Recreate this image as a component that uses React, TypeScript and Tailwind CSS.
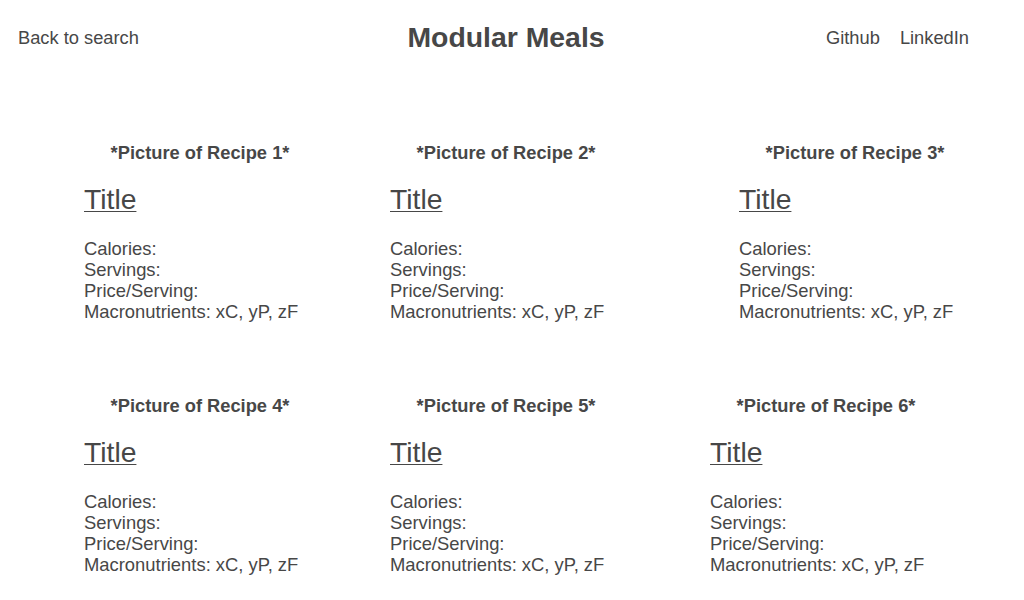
const recipes = [
  { n: 1, ml: "ml-[84px]" },
  { n: 2, ml: "ml-[74px]" },
  { n: 3, ml: "ml-[117px]" },
  { n: 4, ml: "ml-[84px]" },
  { n: 5, ml: "ml-[74px]" },
  { n: 6, ml: "ml-[88px]" },
];

const RecipeCard = ({ n, ml }: { n: number; ml: string }) => {
  return (
    <div className={`w-[232px] shrink-0 ${ml}`}>
      <p className="text-center font-bold text-[18.3px] leading-[21px]">
        *Picture of Recipe {n}*
      </p>
      <h2 className="mt-[20px] text-[28.3px] leading-[32px] underline underline-offset-[2px] decoration-1">
        Title
      </h2>
      <div className="mt-[23px] text-[18.4px] leading-[21px]">
        <p>Calories:</p>
        <p>Servings:</p>
        <p>Price/Serving:</p>
        <p className="whitespace-nowrap">Macronutrients: xC, yP, zF</p>
      </div>
    </div>
  );
};

const App = () => {
  return (
    <div className="w-[1024px] h-[600px] bg-white text-[#474747] font-['Liberation_Sans',Arial,sans-serif] overflow-hidden">
      <header className="h-[75px] flex items-center">
        <div className="w-[390px] pl-[18px] text-[18.3px]">Back to search</div>
        <div className="w-[232px] text-center font-bold text-[28.4px] whitespace-nowrap">
          Modular Meals
        </div>
        <nav className="flex-1 flex gap-[20px] pl-[204px] text-[18.3px]">
          <span>Github</span>
          <span>LinkedIn</span>
        </nav>
      </header>
      <main className="mt-[67px] flex flex-col gap-[73px]">
        <div className="flex">
          {recipes.slice(0, 3).map((r) => (
            <RecipeCard key={r.n} n={r.n} ml={r.ml} />
          ))}
        </div>
        <div className="flex">
          {recipes.slice(3).map((r) => (
            <RecipeCard key={r.n} n={r.n} ml={r.ml} />
          ))}
        </div>
      </main>
    </div>
  );
};

export default App;
